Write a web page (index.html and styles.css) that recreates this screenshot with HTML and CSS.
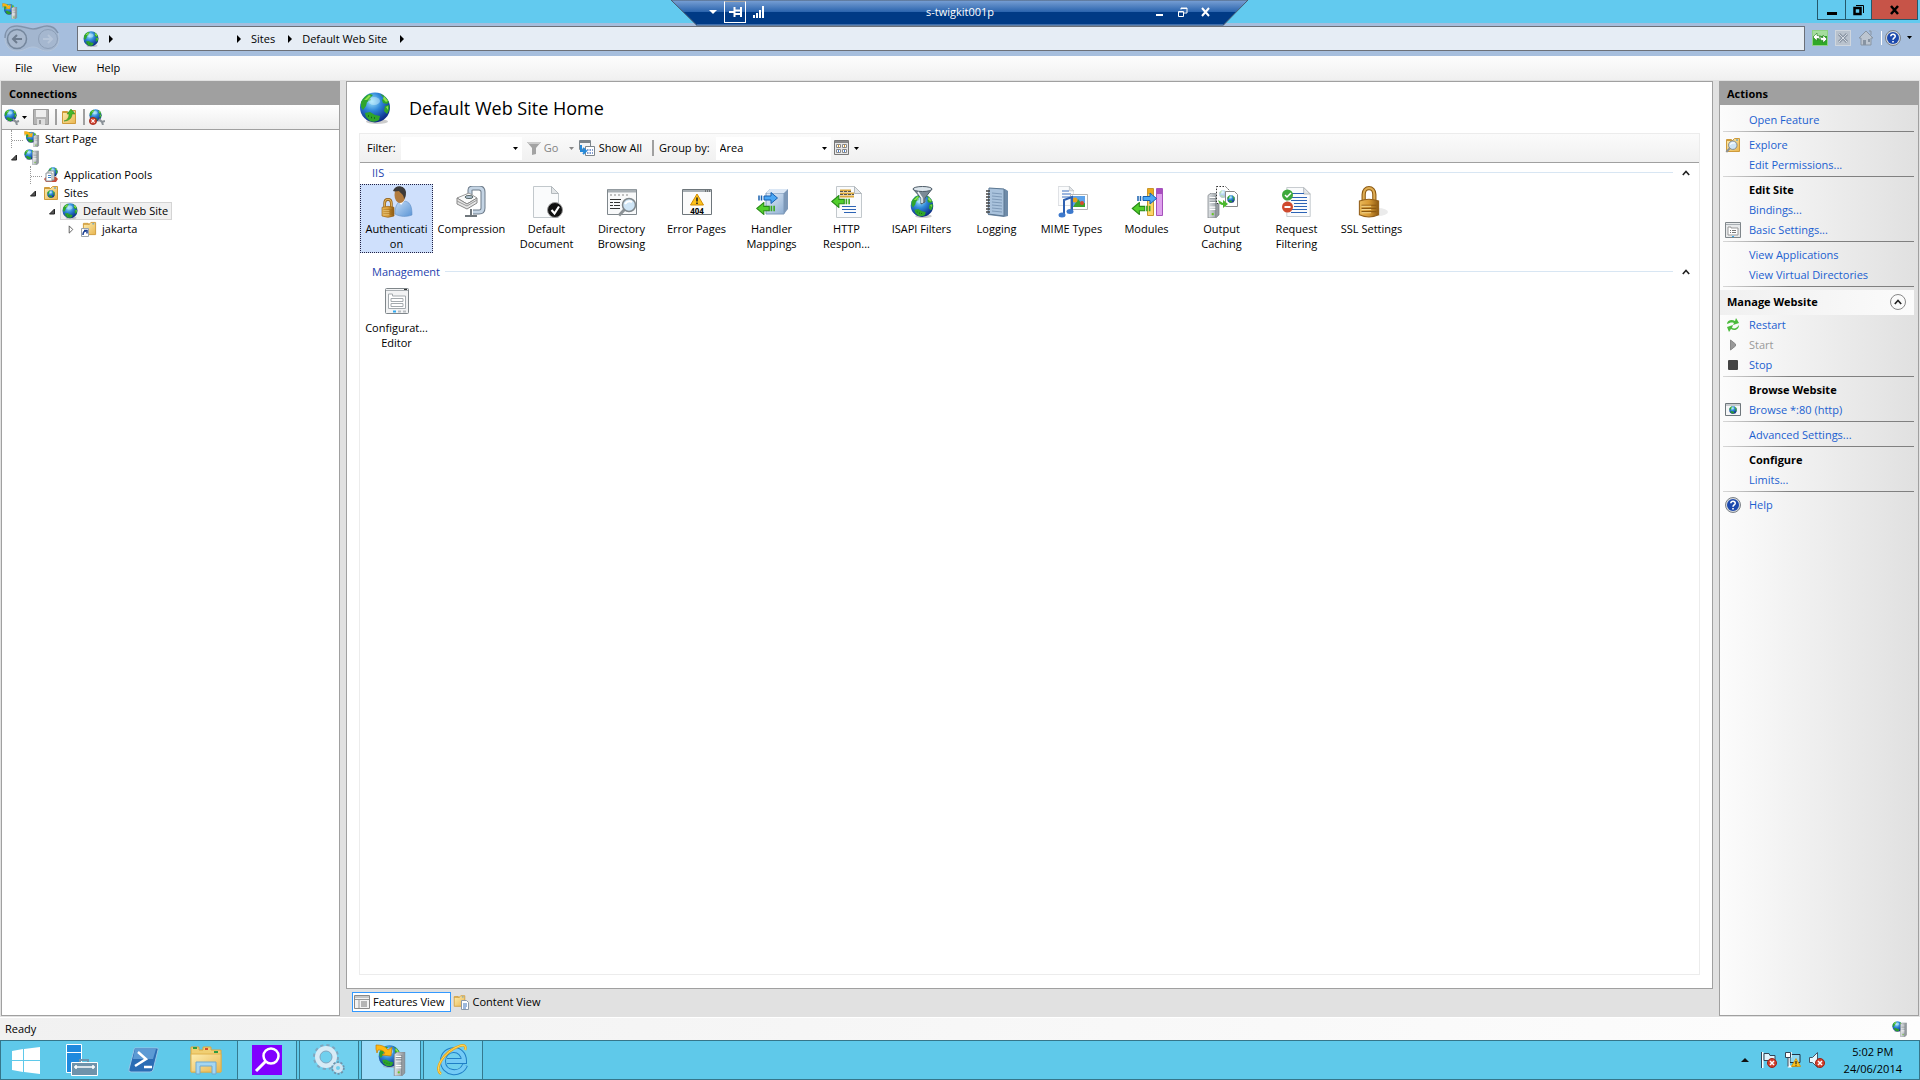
FILE: index.html
```html
<!DOCTYPE html>
<html lang="en">
<head>
<meta charset="utf-8">
<title>Internet Information Services (IIS) Manager</title>
<link rel="stylesheet" href="styles.css">
</head>
<body>
<svg class="sprite" aria-hidden="true">
  <defs>
    <radialGradient id="sea" cx=".4" cy=".3" r=".7"><stop offset="0" stop-color="#9be4fb"/><stop offset=".45" stop-color="#2f86d8"/><stop offset="1" stop-color="#0b2a86"/></radialGradient>
    <linearGradient id="steel" x1="0" x2="1"><stop offset="0" stop-color="#dfe3e6"/><stop offset="1" stop-color="#8b9297"/></linearGradient>
    <linearGradient id="gold" x1="0" x2="1"><stop offset="0" stop-color="#e9b95a"/><stop offset=".5" stop-color="#d89a34"/><stop offset="1" stop-color="#8d5a12"/></linearGradient>
    <linearGradient id="folder" x1="0" y1="0" x2="1" y2="1"><stop offset="0" stop-color="#fdeeb2"/><stop offset="1" stop-color="#e9b650"/></linearGradient>
    <linearGradient id="shirt" x1="0" y1="0" x2="1" y2="1"><stop offset="0" stop-color="#c5dcf6"/><stop offset="1" stop-color="#5b95d6"/></linearGradient>
    <linearGradient id="bluebox" x1="0" y1="0" x2="1" y2="1"><stop offset="0" stop-color="#e6effa"/><stop offset="1" stop-color="#8eaed2"/></linearGradient>
    <linearGradient id="rdp" x1="0" y1="0" x2="0" y2="1"><stop offset="0" stop-color="#7ba2d6"/><stop offset=".46" stop-color="#2c65ae"/><stop offset=".47" stop-color="#003a85"/><stop offset="1" stop-color="#003a85"/></linearGradient>
  </defs>
  <symbol id="globe" viewBox="0 0 32 32">
    <ellipse cx="18" cy="29.500" rx="11" ry="2.500" fill="#999" opacity=".5"/>
    <circle cx="16" cy="15.500" r="15" fill="url(#sea)"/>
    <path d="M2 10c2-4 5-7 9-8l3 1-3 3 1 2-4 2-1 4-3 4-2-3zM21 2c4 1 7 4 9 8l-2 2-4-1-1-3 2-2zM26 14l4-1c1 3 0 6-2 9l-3-3zM6 21l5-1 5 3 5 1-1 4c-3 2-6 2-9 1l-4-4z" fill="#2fa52c"/>
    <path d="M5 8l5-5 2 1-4 4zM25 4l4 5-2 1-3-3zM27 15l2-1v4z" fill="#8fe04c"/>
    <path d="M9 24h1M12 25.500h1M15 26h1" stroke="#14601a" stroke-width="1.500"/>
    <ellipse cx="15" cy="9" rx="6" ry="4" fill="#d4f4ff" opacity=".45"/>
  </symbol>
  <symbol id="tower" viewBox="0 0 16 32">
    <path d="M1 3l4-3h10v28l-4 4H1z" fill="url(#steel)" stroke="#7d8388"/>
    <path d="M3 6h8M3 9h8M3 12h8M3 18h8M3 21h8" stroke="#fff" stroke-width="1.500"/><path d="M3 7.500h8M3 10.500h8M11 4v27" stroke="#70777c"/>
    <circle cx="7" cy="27" r="1.500" fill="#65c522"/>
  </symbol>
  <symbol id="iis" viewBox="0 0 32 32">
    <use href="#globe" x="3" y="1" width="23" height="23"/>
    <path d="M1 1c5 0 9 1 12 5l4-3-1 9-9-1 3-2c-2-3-4-3-7-3l-1 3-1-4z" fill="#fdb913" stroke="#c97b00" stroke-width=".7"/>
    <use href="#tower" x="18" y="8" width="13" height="24"/>
  </symbol>
  <symbol id="websrv" viewBox="0 0 32 32"><use href="#globe" x="0" y="0" width="22" height="22"/><use href="#tower" x="16" y="3" width="14" height="29"/></symbol>
  <symbol id="arrow-g" viewBox="0 0 18 12"><path d="M.5 6L7 .5V4h5v4H7v3.500z" fill="#52cf2c" stroke="#278a16"/><path d="M14 3.500v5M16.500 3.500v5" stroke="#39a81f" stroke-width="1.500"/></symbol>
  <symbol id="arrow-b" viewBox="0 0 20 12"><path d="M19.500 6L13 .5V4H6v4h7v3.500z" fill="#4aa7f5" stroke="#175fae"/><path d="M1 3.500v5M3.500 3.500v5" stroke="#175fae" stroke-width="1.500"/></symbol>
  <symbol id="lock" viewBox="0 0 20 30">
    <path d="M5 14V8c0-8 10-8 10 0v6" fill="none" stroke="#8d5a12" stroke-width="4"/><path d="M5 14V8c0-8 10-8 10 0v6" fill="none" stroke="#dfae55" stroke-width="2"/>
    <path d="M1 14q9-3 18 0v13q-9 4-18 0z" fill="url(#gold)" stroke="#94601a"/><path d="M3 18h14M3 21h14M3 24h14" stroke="#8d5a12"/><path d="M3 19h9M3 22h9M3 25h9" stroke="#f5d78e"/>
  </symbol>
  <symbol id="page" viewBox="0 0 26 32"><path d="M.5.5h18l7 7v24H.5z" fill="#fafbfc" stroke="#c2c8cc"/><path d="M18.500.5v7h7z" fill="#e3e6e8" stroke="#b3b9bd"/></symbol>
  <symbol id="fold" viewBox="0 0 16 16"><path d="M1.500 4V2.500h5L8 4M1.500 3.500h6l2-2h5v13h-13z" fill="url(#folder)" stroke="#cf9b3b"/><path d="M11 3h2" stroke="#3f93d8"/></symbol>
  <symbol id="form" viewBox="0 0 24 26">
    <rect x=".5" y=".5" width="23" height="25" rx="1" fill="#f2f3f4" stroke="#7f868a"/><path d="M1 2.500h22" stroke="#a8aeb2"/><path d="M19 1.500h3" stroke="#333"/>
    <path d="M3.500 6h4v2h13v12.500h-17z" fill="#fff" stroke="#a4aaae"/><path d="M6 10.500h12v3H6zM6 15.500h12v3H6z" fill="none" stroke="#a4aaae"/><path d="M8 23.500h3" stroke="#2fa6ee" stroke-width="2"/><path d="M13 23.500h3M18 23.500h3" stroke="#b9bec1" stroke-width="2"/>
  </symbol>
  <symbol id="bad" viewBox="0 0 10 10"><circle cx="5" cy="5" r="4.500" fill="#d1402e" stroke="#9b2416"/><path d="M3 3l4 4M7 3L3 7" stroke="#fff" stroke-width="1.500"/></symbol>
  <symbol id="lens" viewBox="0 0 20 20"><path d="M7.500 12.500L2 18.500" stroke="#8c9296" stroke-width="3"/><circle cx="12" cy="8" r="6.500" fill="#cfe5f6" stroke="#7f878c" stroke-width="1.500"/><path d="M8 7q3-4 7-2" stroke="#fff" stroke-width="2" fill="none"/></symbol>
  <symbol id="help" viewBox="0 0 16 16"><circle cx="8" cy="8" r="7.500" fill="#d5d9dd" stroke="#7c8288"/><circle cx="8" cy="8" r="6" fill="#1c49ad"/><path d="M5.800 6.300C6 3.500 10.500 3.700 10.200 6.500 10 8 8 8 8 9.800M8 11v1.500" stroke="#fff" stroke-width="1.600" fill="none"/></symbol>
  <symbol id="up" viewBox="0 0 8 6"><path d="M.8 5L4 1.500 7.200 5" fill="none" stroke="#222" stroke-width="1.600"/></symbol>
  <symbol id="down" viewBox="0 0 5 3"><path d="M0 0h5L2.500 3z"/></symbol>
  <symbol id="play" viewBox="0 0 4 8"><path d="M0 0l4 4-4 4z"/></symbol>
  <symbol id="warn" viewBox="0 0 14 12"><path d="M7 .5L13.500 11.500H.5z" fill="#fcc21c" stroke="#d08a00"/><path d="M7 4v4M7 9v1.500" stroke="#222" stroke-width="1.600"/></symbol>
  <symbol id="open" viewBox="0 0 6 6"><path d="M5.500.5v5h-5z" fill="#555" stroke="#222"/></symbol>
</svg>

<header class="titlebar">
  <svg class="i16"><use href="#iis"/></svg>
  <div class="winbtns">
    <button aria-label="Minimize"><svg width="12" height="12"><path d="M1 8h10v3H1z"/></svg></button>
    <button class="restore" aria-label="Restore"><svg width="12" height="12" fill="none" stroke="#000"><path d="M1.500 4h6v6h-6z" stroke-width="2.500"/><path d="M3 1.500h7.500V9"/></svg></button>
    <button class="close" aria-label="Close"><svg width="12" height="12"><path d="M2 2l7 8M9 2l-7 8" stroke="#000" stroke-width="2.500"/></svg></button>
  </div>
</header>

<div class="rdp">
  <svg class="rdp-bg" viewBox="0 0 578 26" aria-hidden="true"><path d="M0 0l26 25.500h526L577 0z" fill="url(#rdp)" stroke="#4a5a6e"/><path d="M26 25h526" stroke="#7a9fd0"/></svg>
  <div class="rdp-left">
    <button aria-label="Menu"><svg width="8" height="4"><path d="M0 0h8L4 4z" fill="#fff"/></svg></button>
    <button class="pin" aria-label="Pin"><svg width="13" height="10" fill="none" stroke="#fff" stroke-width="2"><path d="M0 5h5M5.500 0v10M6 3.500h5M6 7h5M12 0v10"/></svg></button>
    <svg width="12" height="12"><path d="M0 12V9h2v3zM3 12V7h2v5zM6 12V4h2v8zM9 12V0h2v12z" fill="#fff"/></svg>
  </div>
  <span class="rdp-name">s-twigkit001p</span>
  <div class="rdp-right">
    <button aria-label="Minimize session"><svg width="10" height="10"><path d="M1 7h7v2H1z" fill="#fff"/></svg></button>
    <button aria-label="Restore session"><svg width="10" height="10" fill="none" stroke="#fff"><path d="M.5 4.500h5v5h-5zM3 2.500V1h6v5H6M1 5h4M3 1.500h6"/></svg></button>
    <button aria-label="Close session"><svg width="10" height="10"><path d="M1 1l7 8M8 1L1 9" stroke="#fff" stroke-width="2"/></svg></button>
  </div>
</div>

<nav class="address" aria-label="Address">
  <svg class="navpill" viewBox="0 0 56 28" aria-hidden="true"><path d="M13 1c7 0 10 3 16 3s8-3 14-3c16 0 16 25 0 25-7 0-8-4-14-4s-8 4-16 4C-3 26-3 1 13 1z" fill="#a3b6cf" stroke="#b3c4da"/><path d="M1 13C1 5 6 1 13 1c7 0 10 3 16 3s8-3 14-3c5 0 9 3 11 7" fill="none" stroke="#8093ac" stroke-width="1.500"/><circle cx="13" cy="14" r="9.500" fill="#a9b9ce" stroke="#75879d" stroke-width="1.500"/><circle cx="44" cy="14" r="9.500" fill="#a5b7cf" stroke="#8c9eb6"/><path d="M18 14H9m4-4l-4 4 4 4" fill="none" stroke="#6d7c8f" stroke-width="2"/><path d="M39 14h9m-4-4l4 4-4 4" fill="none" stroke="#b6c5d9" stroke-width="2"/></svg>
  <div class="crumbs">
    <svg class="i16"><use href="#globe"/></svg>
    <svg class="tri"><use href="#play"/></svg><a class="blank" href="#server" aria-label="Server"></a>
    <svg class="tri"><use href="#play"/></svg><a href="#sites">Sites</a>
    <svg class="tri"><use href="#play"/></svg><a href="#default">Default Web Site</a>
    <svg class="tri"><use href="#play"/></svg>
  </div>
  <div class="addr-tools">
    <button aria-label="Refresh"><svg class="i16" viewBox="0 0 16 16"><rect x=".5" y=".5" width="15" height="15" fill="#2fa827" stroke="#8ed184"/><path d="M1 1h14v5H1z" fill="#a4dd9d"/><path d="M1 7l4-4v2.500c3 0 4 2 3 5-1-2-1-2-3-2V11zM15 9l-4 4v-2.500c-3 0-4-2-3-5 1 2 1 2 3 2V5z" fill="#fff" stroke="#24751c" stroke-width=".6"/></svg></button>
    <button aria-label="Stop loading"><svg class="i16" viewBox="0 0 16 16"><rect x=".5" y=".5" width="15" height="15" fill="#b9c2cd" stroke="#cfd6de"/><path d="M4 4l8 8M12 4l-8 8" stroke="#8b96a5" stroke-width="3"/><path d="M4 4l8 8M12 4l-8 8" stroke="#d5dbe2"/></svg></button>
    <button aria-label="Home"><svg class="i16" viewBox="0 0 16 16"><path d="M1 8l7-7 7 7h-2v7H3V8z" fill="#bcc5d0" stroke="#8995a3"/><path d="M5 10h3v5H5zM10 9h2v3h-2z" fill="#8793a2"/><path d="M11 1h2v4" fill="none" stroke="#8995a3"/></svg></button>
    <span class="vbar"></span>
    <button aria-label="Help"><svg class="i16"><use href="#help"/></svg><svg class="dd"><use href="#down"/></svg></button>
  </div>
</nav>

<nav class="menubar"><button>File</button><button>View</button><button>Help</button></nav>

<main class="work">
  <section class="panel connections">
    <h2>Connections</h2>
    <div class="minitools">
      <button aria-label="Connect"><svg class="i16" viewBox="0 0 16 16"><use href="#globe" width="13" height="13"/><path d="M9 10l3 3 3-1M12 13l1 3" stroke="#8a9197" stroke-width="2" fill="none"/></svg><svg class="dd"><use href="#down"/></svg></button>
      <button aria-label="Save"><svg class="i16" viewBox="0 0 16 16"><path d="M.5.5h15v15h-15z" fill="#b4b4b4" stroke="#999"/><path d="M3 1h10v7H3z" fill="#eee"/><path d="M4 10h8v6H4z" fill="#ddd"/><path d="M6 11h2v4H6z" fill="#999"/></svg></button>
      <span class="vbar"></span>
      <button aria-label="Up"><svg class="i16" viewBox="0 0 16 16"><use href="#fold" width="16" height="16"/><path d="M3 12c4-1 5-4 5-7H6l4-5 4 5h-3c0 4-3 7-8 7z" fill="#47b82a" stroke="#28831a" stroke-width=".5"/></svg></button>
      <span class="vbar"></span>
      <button aria-label="Disconnect"><svg class="i16" viewBox="0 0 16 16"><use href="#globe" width="13" height="13"/><path d="M10 10l3 3 3-1M13 13l1 3" stroke="#8a9197" stroke-width="2" fill="none"/><use href="#bad" y="8" width="8" height="8"/></svg></button>
    </div>
    <ul class="tree">
      <li class="l0"><i class="exp dots corner"></i><a href="#start"><svg class="i16"><use href="#iis"/></svg>Start Page</a></li>
      <li class="l0"><i class="exp"><svg><use href="#open"/></svg></i><a href="#server" aria-label="Server"><svg class="i16"><use href="#websrv"/></svg></a></li>
      <li class="l1"><i class="exp dots corner"></i><a href="#pools"><svg class="i16" viewBox="0 0 16 16"><use href="#globe" x="5" width="10" height="10"/><path d="M1 12l2-2h10l2 2-2 3H3z" fill="#c54b38"/><path d="M5 4h6v9H5z" fill="#fff" stroke="#8d9499"/><path d="M3 6h6v8H3z" fill="#fff" stroke="#8d9499"/><path d="M5 8.500h3M5 10.500h3" stroke="#3d83c9"/></svg>Application Pools</a></li>
      <li class="l1"><i class="exp"><svg><use href="#open"/></svg></i><a href="#sites"><svg class="i16" viewBox="0 0 16 16"><use href="#fold" width="16" height="16"/><use href="#globe" x="4" y="5" width="8" height="8"/></svg>Sites</a></li>
      <li class="l2"><i class="exp"><svg><use href="#open"/></svg></i><a class="sel" href="#default"><svg class="i16"><use href="#globe"/></svg>Default Web Site</a></li>
      <li class="l3"><i class="exp"><svg viewBox="0 0 6 10"><path d="M1 1l4 4-4 4z" fill="#fff" stroke="#555"/></svg></i><a href="#jakarta"><svg class="i16" viewBox="0 0 16 16"><use href="#fold" x="1" width="15" height="15"/><path d="M.5 7.500h7v8h-7z" fill="#fff" stroke="#9aa3aa"/><path d="M2 14c0-3 1-4 3-4M3 9.500h3v3" fill="none" stroke="#1b3f93" stroke-width="1.500"/></svg>jakarta</a></li>
    </ul>
  </section>

  <section class="center">
    <div class="panel home">
      <div class="homehead"><svg class="i32"><use href="#globe"/></svg><h1>Default Web Site Home</h1></div>
      <div class="features">
        <div class="filterbar">
          <label for="filter">Filter:</label>
          <span class="combo filter"><input id="filter" type="text"><svg class="dd"><use href="#down"/></svg></span>
          <button class="go" disabled><svg class="i16" viewBox="0 0 16 16"><path d="M1 2h14l-5 6v6l-4 1V8z" fill="#a3a3a3"/><path d="M1 2h14l-2 2H3z" fill="#ccc"/></svg>Go<svg class="dd"><use href="#down"/></svg></button>
          <button><svg class="i16" viewBox="0 0 16 16"><path d="M.5.5h11v9H.5z" fill="#f3f5f6" stroke="#7c858b"/><path d="M1 2h10" stroke="#7c858b" stroke-width="2"/><path d="M6.500 6.500h9v9h-9z" fill="#fff" stroke="#7c858b"/><path d="M8 10h6M8 13h6" stroke="#5b7fc1" stroke-width="1.500" stroke-dasharray="1.500 1"/><path d="M2 5v6h4M4 8l3 3-3 3" stroke="#2689d8" stroke-width="2" fill="none"/></svg>Show All</button>
          <span class="vbar"></span>
          <label for="group">Group by:</label>
          <span class="combo group"><select id="group"><option>Area</option></select><svg class="dd"><use href="#down"/></svg></span>
          <button aria-label="View"><svg class="i16" viewBox="0 0 16 16"><path d="M.5.5h14v14H.5z" fill="#e8e8e8" stroke="#777"/><path d="M1 2h13" stroke="#888" stroke-width="2"/><path d="M2.500 4.500h4v3h-4zM8.500 4.500h4v3h-4zM2.500 9.500h4v3h-4zM8.500 9.500h4v3h-4z" fill="#fff" stroke="#888"/><path d="M4 6h1M10 6h1" stroke="#d59a2c" stroke-width="2"/><path d="M4 11h1M10 11h1" stroke="#4a7fce" stroke-width="2"/></svg><svg class="dd"><use href="#down"/></svg></button>
        </div>
        <div class="grouphead"><h3>IIS</h3><hr><button aria-label="Collapse IIS"><svg width="8" height="6"><use href="#up"/></svg></button></div>
        <div class="grid">
          <a class="feat on" href="#f"><svg class="i32" viewBox="0 0 32 32"><path d="M14 28c0-9 3-13 8-13 7 0 9 5 9 14-5 2-12 2-17-1z" fill="url(#shirt)" stroke="#5f8fc6" stroke-width=".6"/><path d="M17 14l3 5 4-5z" fill="#fff"/><ellipse cx="19" cy="9" rx="5.500" ry="8" fill="#b27b3f"/><path d="M12 5c2-7 12-6 13 1 0 4-1 6-2 7 0-5-4-6-5-8-2 0-4 1-6 0z" fill="#3d3a38"/><use href="#lock" x="0" y="12" width="14" height="20"/></svg><span>Authenticati on</span></a>
          <a class="feat" href="#f"><svg class="i32" viewBox="0 0 32 32"><path d="M14 9V4q0-2 3-2h6q4 0 4 4v16q0 4-4 4h-6" fill="none" stroke="#6c7a88" stroke-width="5"/><path d="M14 9V4q0-2 3-2h6q4 0 4 4v16q0 4-4 4h-6" fill="none" stroke="#c4d4e4" stroke-width="3"/><path d="M1 12l12-5 8 5-10 6z" fill="#fafafa" stroke="#999"/><path d="M1 12v6l10 5 10-6v-5l-10 6z" fill="#e6e6e6" stroke="#888"/><path d="M1 15l10 5 10-6" fill="none" stroke="#999"/><path d="M15 23v6M9 30h12" stroke="#70777c" stroke-width="2"/><ellipse cx="13" cy="11" rx="4" ry="1.500" fill="#b8c8d8" stroke="#566"/></svg><span>Compression</span></a>
          <a class="feat" href="#f"><svg class="i32" viewBox="0 0 32 32"><use href="#page" x="2" y="0" width="26" height="32"/><circle cx="24" cy="24" r="7.500" fill="#111" stroke="#999"/><path d="M20.500 24l3 3.500 4.500-7" fill="none" stroke="#fff" stroke-width="2.200"/></svg><span>Default Document</span></a>
          <a class="feat" href="#f"><svg class="i32" viewBox="0 0 32 32"><path d="M1.500 3.500h29v25h-29z" fill="#f8f9fa" stroke="#7f878c"/><path d="M2 5h28" stroke="#a8afb4" stroke-width="3"/><path d="M4 9h20" stroke="#888" stroke-dasharray="2 2"/><path d="M4 13.500h11M4 16.500h3M8 16.500h6M4 19.500h3M8 19.500h6M4 22.500h10" stroke="#333"/><use href="#lens" x="11" y="11" width="20" height="20"/></svg><span>Directory Browsing</span></a>
          <a class="feat" href="#f"><svg class="i32" viewBox="0 0 32 32"><path d="M1.500 3.500h29v25h-29z" fill="#fbfbfb" stroke="#6e767b"/><path d="M2 5h28" stroke="#a8afb4" stroke-width="2"/><path d="M24 5h5" stroke="#333" stroke-dasharray="1 1"/><use href="#warn" x="9" y="7" width="14" height="13"/><text x="16" y="28" font-size="8" text-anchor="middle" font-weight="700">404</text></svg><span>Error Pages</span></a>
          <a class="feat" href="#f"><svg class="i32" viewBox="0 0 32 32"><path d="M10 7l4-4h18v20l-4 5H10z" fill="#7d98b8"/><path d="M10 7h18v21H10z" fill="url(#bluebox)" stroke="#7d98b8"/><path d="M10 7l4-4h18l-4 4z" fill="#dbe7f5"/><use href="#arrow-b" x="2" y="6" width="20" height="12"/><use href="#arrow-g" x="0" y="16" width="20" height="13"/></svg><span>Handler Mappings</span></a>
          <a class="feat" href="#f"><svg class="i32" viewBox="0 0 32 32"><use href="#page" x="5" y="0" width="26" height="32"/><path d="M9 4.500h11M9 7.500h14M9 10.500h14" stroke="#d9a83c" stroke-width="2"/><path d="M9 5.500h11M9 8.500h14" stroke="#555" stroke-dasharray="3 1"/><path d="M11 20.500h14M11 23.500h14M13 26.500h12" stroke="#2c63b5"/><use href="#arrow-g" x="0" y="9" width="20" height="13"/></svg><span>HTTP Respon...</span></a>
          <a class="feat" href="#f"><svg class="i32" viewBox="0 0 32 32"><use href="#globe" x="4" y="8" width="24" height="24"/><path d="M7 3l8 9v6l4-2v-4l7-9z" fill="#7b8a96" stroke="#4c5a66"/><ellipse cx="16.500" cy="3" rx="9.500" ry="2.500" fill="#dce5ec" stroke="#4c5a66"/><path d="M12 6l4 6v5" stroke="#eef3f6" fill="none" stroke-width="1.500"/></svg><span>ISAPI Filters</span></a>
          <a class="feat" href="#f"><svg class="i32" viewBox="0 0 32 32"><path d="M8 2l16 1 3 2v25l-4 1-16-2z" fill="#6f8ba8"/><path d="M8 2l15 1v27L7 28z" fill="#a9c2dc" stroke="#5d7893"/><path d="M11 7l10 1M11 10l10 1M11 13l10 1M11 16l10 1M11 19l10 1M11 22l10 1M11 25l10 1" stroke="#7e9ab8"/><path d="M5 5h4M5 8h4M5 11h4M5 14h4M5 17h4M5 20h4M5 23h4M5 26h4" stroke="#444" stroke-width="1.300"/></svg><span>Logging</span></a>
          <a class="feat" href="#f"><svg class="i32" viewBox="0 0 32 32"><use href="#page" x="2" y="0" width="16" height="20"/><path d="M6 5h7M6 8h9M6 11h9" stroke="#3b6fc0"/><path d="M14.500 8.500h17v15h-17z" fill="#fff" stroke="#b5b5b5"/><path d="M17 10h12v11H17z" fill="#5da2ea"/><path d="M17 21l5-8 4 5 3-1v4z" fill="#3da22b"/><circle cx="19" cy="14" r="2.500" fill="#e8a11c"/><circle cx="26" cy="17" r="2" fill="#d84a2b"/><path d="M8 28V14l8-3v14" fill="none" stroke="#2c5fb0" stroke-width="2"/><ellipse cx="6" cy="29" rx="3.500" ry="2.500" fill="#3c78cc"/><ellipse cx="14" cy="25.500" rx="3.500" ry="2.500" fill="#3c78cc"/></svg><span>MIME Types</span></a>
          <a class="feat" href="#f"><svg class="i32" viewBox="0 0 32 32"><path d="M16.500 2.500h6v27h-6z" fill="#fbd66a" stroke="#c8962a"/><path d="M17 3h5v5h-5z" fill="#e9a91c"/><path d="M25.500 2.500h6v27h-6z" fill="#dfa0ee" stroke="#a552bb"/><path d="M26 3h5v5h-5z" fill="#a94cc0"/><use href="#arrow-b" x="6" y="6" width="20" height="13"/><use href="#arrow-g" x="0" y="16" width="21" height="13"/></svg><span>Modules</span></a>
          <a class="feat" href="#f"><svg class="i32" viewBox="0 0 32 32"><use href="#tower" x="0" y="7" width="15" height="25"/><path d="M10.500.5h9l4 4v13h-13z" fill="#fff" stroke="#333" stroke-dasharray="1.500 1.500"/><use href="#globe" x="13" y="4" width="8" height="8" opacity=".35"/><path d="M19.500 5.500h9l3 3v12h-12z" fill="#fff" stroke="#888"/><use href="#globe" x="21" y="9" width="8" height="8"/><path d="M12 14l5 3v-3l5 4-5 4v-3c-3 0-4-2-5-5z" fill="#4bb82c"/></svg><span>Output Caching</span></a>
          <a class="feat" href="#f"><svg class="i32" viewBox="0 0 32 32"><use href="#page" x="5" y="1" width="25" height="30"/><path d="M10 7.500h13M10 11.500h16M10 14.500h16M13 17.500h13M13 20.500h13M10 23.500h16M10 26.500h16" stroke="#2c63b5"/><circle cx="6.500" cy="9" r="5.500" fill="#3da93a"/><path d="M4 9l2 2 4-4" stroke="#fff" stroke-width="1.500" fill="none"/><circle cx="6.500" cy="21" r="5.500" fill="#cf4a2e"/><path d="M3.500 21h6" stroke="#fff" stroke-width="2"/></svg><span>Request Filtering</span></a>
          <a class="feat" href="#f"><svg class="i32" viewBox="0 0 32 32"><ellipse cx="22" cy="26" rx="10" ry="4" fill="#ebebeb"/><use href="#lock" x="2" y="0" width="22" height="32"/></svg><span>SSL Settings</span></a>
        </div>
        <div class="grouphead"><h3>Management</h3><hr><button aria-label="Collapse Management"><svg width="8" height="6"><use href="#up"/></svg></button></div>
        <div class="grid">
          <a class="feat" href="#f"><svg class="i32" viewBox="0 0 32 32"><use href="#form" x="4" y="3" width="24" height="26"/></svg><span>Configurat... Editor</span></a>
        </div>
      </div>
    </div>
    <div class="viewtabs">
      <button class="cur"><svg class="i16" viewBox="0 0 16 16"><path d="M.5 1.500h15v13H.5z" fill="#f3f3f3" stroke="#888"/><path d="M1 3h14M1 5.500h14M5 5v9" stroke="#999"/><path d="M7 8h6M7 10h6M7 12h6" stroke="#777"/></svg>Features View</button>
      <button><svg class="i16" viewBox="0 0 16 16"><use href="#fold" width="13" height="14"/><path d="M8.500 6.500h5l2 2v7h-7z" fill="#fff" stroke="#8b98a8"/><path d="M10 10h4M10 12h4M10 14h3" stroke="#3d73bb"/></svg>Content View</button>
    </div>
  </section>

  <aside class="panel actions">
    <h2>Actions</h2>
    <div class="actlist">
      <a href="#a">Open Feature</a>
      <hr>
      <a href="#a"><svg class="i16" viewBox="0 0 16 16"><use href="#fold" width="16" height="16"/><use href="#lens" x="0" y="3" width="13" height="13"/></svg>Explore</a>
      <a href="#a">Edit Permissions...</a>
      <hr>
      <h4>Edit Site</h4>
      <a href="#a">Bindings...</a>
      <a href="#a"><svg class="i16" viewBox="0 0 16 16"><path d="M.5.500h15v15H.5z" fill="#e8eaeb" stroke="#7f868a"/><path d="M1 2.500h14" stroke="#a8aeb2"/><path d="M3 5h3v1h7v7H3z" fill="#fff" stroke="#999"/><path d="M5 8.500h1M7 8.500h4M5 10.500h1M7 10.500h4" stroke="#777"/><path d="M7 14.500h2" stroke="#2fa6ee"/></svg>Basic Settings...</a>
      <hr>
      <a href="#a">View Applications</a>
      <a href="#a">View Virtual Directories</a>
      <hr>
      <div class="acthead"><h4>Manage Website</h4><button aria-label="Collapse"><svg width="8" height="6"><use href="#up"/></svg></button></div>
      <a href="#a"><svg class="i16" viewBox="0 0 16 16"><path d="M2 7c0-4 5-5 8-3l1-3 3 5-6 2 1-2c-3-1-4 0-7 1zM14 8c0 5-5 6-8 4l-2 3-2-5 6-2-1 3c3 1 5 0 7-3z" fill="#4cbb3c"/></svg>Restart</a>
      <a class="off" aria-disabled="true"><svg class="i16" viewBox="0 0 16 16"><path d="M5.500 3v10l5-4V7z" fill="#999" stroke="#888"/></svg>Start</a>
      <a href="#a"><svg class="i16" viewBox="0 0 16 16"><rect x="3" y="3" width="10" height="10" rx="1" fill="#444"/></svg>Stop</a>
      <hr>
      <h4>Browse Website</h4>
      <a href="#a"><svg class="i16" viewBox="0 0 16 16"><path d="M.5 1.500h15v12H.5z" fill="#f5f6f7" stroke="#6f777c"/><path d="M1 3h14" stroke="#9aa2a7"/><use href="#globe" x="4" y="4" width="8" height="8"/></svg>Browse *:80 (http)</a>
      <hr>
      <a href="#a">Advanced Settings...</a>
      <hr>
      <h4>Configure</h4>
      <a href="#a">Limits...</a>
      <hr>
      <a href="#a"><svg class="i16"><use href="#help"/></svg>Help</a>
    </div>
  </aside>
</main>

<footer class="status"><span>Ready</span><svg class="i16"><use href="#websrv"/></svg></footer>

<nav class="taskbar" aria-label="Taskbar">
  <button class="start" aria-label="Start"><svg width="28" height="27" viewBox="0 0 28 27"><path d="M0 4l11-2v11H0zM12 2l16-2v13H12zM0 14h11v11L0 23zM12 14h16v13l-16-2z" fill="#fff"/></svg></button>
  <button aria-label="Server Manager"><svg width="32" height="32" viewBox="0 0 32 32"><path d="M.5.5h15v28H.5z" fill="#1f8ade" stroke="#fff"/><path d="M1 8.500h14" stroke="#fff"/><path d="M14 19v-3h8v3" fill="none" stroke="#6d93ad" stroke-width="2"/><path d="M5.500 18.500h26v13h-26z" fill="#6f93ab" stroke="#fff"/><path d="M8 23h21M10 21v4M27 21v4" stroke="#fff" stroke-width="1.500"/></svg></button>
  <button aria-label="PowerShell"><svg width="32" height="32" viewBox="0 0 32 32"><path d="M7 4h22q2 0 1 2l-5 20q-1 2-3 2H3q-3 0-2-3L6 6q0-2 1-2z" fill="#2a6cb4" stroke="#9ac6e8"/><path d="M7 5h21l-3 10H5z" fill="#5c9ad4"/><path d="M10 8l8 7-11 7M16 23h8" fill="none" stroke="#fff" stroke-width="2.500"/></svg></button>
  <button aria-label="File Explorer"><svg width="32" height="32" viewBox="0 0 32 32"><path d="M1 6V3h8v3h4V3h8v3h10v22H1z" fill="#f0cf73" stroke="#d9a741"/><path d="M3 4h4M24 8h4" stroke="#2e9c42" stroke-width="2"/><path d="M15 5h3" stroke="#d54a2c" stroke-width="2"/><path d="M1 10h30v18H1z" fill="url(#folder)" stroke="#e0b24e"/><path d="M6 30V18h20v12h-4v-8H10v8z" fill="#a4d6f2" stroke="#6fa9d0"/></svg></button>
  <button class="run" aria-label="Search"><svg width="30" height="30" viewBox="0 0 30 30"><path d="M0 0h30v30H0z" fill="#8000ff"/><circle cx="19" cy="11" r="7.500" fill="none" stroke="#fff" stroke-width="2.500"/><path d="M13.500 16.500L4 26" stroke="#fff" stroke-width="3"/></svg></button>
  <button class="run" aria-label="Services"><svg width="32" height="32" viewBox="0 0 32 32"><circle cx="13" cy="13" r="11" fill="none" stroke="#7ea6bf" stroke-width="4" stroke-dasharray="3 2.760"/><circle cx="13" cy="13" r="8.500" fill="none" stroke="#d7ebf6" stroke-width="5"/><circle cx="13" cy="13" r="6" fill="none" stroke="#7ea6bf"/><circle cx="25" cy="24" r="5.500" fill="none" stroke="#6f93ab" stroke-width="2.500" stroke-dasharray="2 1.450"/><circle cx="25" cy="24" r="3.500" fill="none" stroke="#cfe4f0" stroke-width="3"/></svg></button>
  <button class="run front" aria-label="IIS Manager"><svg width="32" height="32"><use href="#iis"/></svg></button>
  <button class="run" aria-label="Internet Explorer"><svg width="32" height="32" viewBox="0 0 32 32"><path d="M28 21C24 32 6 30 6 17 6 3 27 2 27 17H10" fill="none" stroke="#1f7fc6" stroke-width="6"/><path d="M28 21C24 32 6 30 6 17 6 3 27 2 27 17H10" fill="none" stroke="#74cbf6" stroke-width="4"/><path d="M4 30C-4 24 8 8 20 3c6-3 10-2 8 3" fill="none" stroke="#e9a91c" stroke-width="2.500"/><path d="M4 30C-4 24 8 8 20 3c6-3 10-2 8 3" fill="none" stroke="#ffdc62"/></svg></button>
  <div class="tray">
    <button aria-label="Show hidden icons"><svg width="8" height="4"><path d="M4 0l4 4H0z" fill="#111"/></svg></button>
    <svg class="i16" viewBox="0 0 16 16"><path d="M1.500 0v16" stroke="#fff" stroke-width="2"/><path d="M.5 0v16M3 1.500h5l1 2h5v7H8l-1-2H3z" fill="#dff3fb" stroke="#345"/><use href="#bad" x="6" y="6" width="10" height="10"/></svg>
    <svg class="i16" viewBox="0 0 16 16"><path d="M5 2.500h10v8H5z" fill="#8fd8f0" stroke="#234"/><path d="M7 14h6" stroke="#234"/><path d="M.8.500h5v4h-2v10h3" fill="none" stroke="#fff" stroke-width="2"/><path d="M.5.500h5v5h-5zM3 6v8.500" fill="#fff" stroke="#345"/><use href="#warn" x="6" y="6" width="10" height="9"/></svg>
    <svg class="i16" viewBox="0 0 16 16"><path d="M.5 5.500h3l5-5v15l-5-5h-3z" fill="#e8f7fd" stroke="#456"/><use href="#bad" x="6" y="6" width="10" height="10"/></svg>
    <div class="clock"><time>5:02 PM</time><time>24/06/2014</time></div>
  </div>
</nav>
</body>
</html>
```
FILE: styles.css
```css
* { box-sizing: border-box; }

body {
  margin: 0;
  height: 100vh;
  display: flex;
  flex-direction: column;
  overflow: hidden;
  background: #e1e1e1;
  color: #000;
  font: 11px/18px "Open Sans", "Noto Sans", sans-serif;
}

button, input, select { font: inherit; color: inherit; border: 0; padding: 0; margin: 0; background: none; }
button { display: flex; align-items: center; white-space: nowrap; }
a { color: inherit; text-decoration: none; }
h1, h2, h3, h4, ul, hr { margin: 0; padding: 0; }
h2, h4 { font-size: 11px; font-weight: 700; }
svg { flex: none; display: block; }
.sprite { position: absolute; width: 0; height: 0; }
.i16 { width: 16px; height: 16px; }
.i32 { width: 32px; height: 32px; }
.dd { width: 5px; height: 3px; }
.vbar { width: 2px; height: 16px; background: #a0a0a0; }

/* window frame */
.titlebar { height: 23px; flex: none; display: flex; justify-content: space-between; padding: 0 2px; background: #62caef; }
.titlebar > svg { margin-top: 3px; }
.winbtns { display: flex; height: 20px; }
.winbtns button { width: 28px; justify-content: center; border: 1px solid #24586b; border-top: 0; border-right: 0; }
.winbtns .restore { width: 26px; }
.winbtns .close { width: 47px; background: #c75448; border-right: 1px solid #24586b; }

/* remote session bar, floats over the window */
.rdp { position: absolute; top: 0; left: 50%; width: 578px; height: 26px; margin-left: -289px; display: flex; align-items: center; justify-content: space-between; padding: 0 38px 2px 38px; color: #fff; }
.rdp-bg { position: absolute; left: 0; top: 0; width: 578px; height: 26px; }
.rdp-left, .rdp-right, .rdp-name { position: relative; display: flex; align-items: center; flex: 1; }
.rdp-left { gap: 7px; }
.rdp-name { justify-content: center; }
.rdp-right { justify-content: flex-end; gap: 13px; }
.pin { width: 22px; height: 22px; justify-content: center; border: 1px solid #fff; border-top-color: #a9a9a9; }

.address { height: 33px; flex: none; display: flex; align-items: center; background: #a6bedd; padding: 0 8px 2px 4px; }
.navpill { width: 56px; height: 28px; }
.crumbs { flex: 1; height: 25px; margin: 0 7px 0 17px; padding-left: 5px; display: flex; align-items: center; background: #e6edf5; border: 1px solid #6b7079; }
.tri { width: 4px; height: 8px; margin: 0 10px 0 10px; }
.blank { width: 104px; }
.crumbs a + .tri { margin-left: 13px; }
.crumbs .blank + .tri { margin-left: 10px; }
.addr-tools { display: flex; align-items: center; gap: 7px; padding-bottom: 2px; }
.addr-tools .vbar { height: 14px; width: 1px; background: #fff; }
.addr-tools .dd { margin-left: 6px; }
.addr-tools .vbar + button { margin-left: -4px; }

.menubar { height: 24px; flex: none; display: flex; gap: 20px; padding-left: 15px; background: linear-gradient(#fdfdfd, #f0f0f0); }

/* work area */
.work { flex: 1; min-height: 0; display: flex; padding: 1px; gap: 6px; }
.panel { background: #fff; border: 1px solid #a0a0a0; }
.panel h2 { height: 24px; line-height: 26px; padding-left: 7px; background: #a0a0a0; margin-top: -1px; }
.connections { width: 339px; }
.minitools { height: 25px; display: flex; align-items: center; gap: 6px; padding-left: 2px; background: linear-gradient(#fff, #ededed); border-bottom: 1px solid #a0a0a0; }
.minitools .dd { margin: 0 0 0 2px; }
.minitools .vbar { margin-right: -2px; }

.tree { list-style: none; }
.tree li { display: flex; align-items: center; height: 18px; }
.tree a { display: flex; align-items: center; gap: 5px; height: 18px; padding: 0 4px 0 2px; }
.tree .sel { background: #f0f0f0; outline: 1px solid #d4d4d4; outline-offset: -1px; }
.exp { width: 12px; height: 18px; display: flex; align-items: center; margin-right: -1px; }
.exp svg { width: 6px; height: 9px; }
.dots { background: linear-gradient(90deg, #999 50%, transparent 50%) 0 10px / 2px 1px repeat-x; }
.dots.corner { border-left: 1px dotted #999; }
.l0 { padding-left: 9px; }
.l1 { padding-left: 28px; }
.l2 { padding-left: 47px; }
.l3 { padding-left: 66px; }

.center { flex: 1; min-width: 0; display: flex; flex-direction: column; }
.home { flex: 1; display: flex; flex-direction: column; padding: 0 12px 13px 12px; }
.homehead { height: 51px; display: flex; align-items: center; gap: 18px; }
.homehead h1 { font-size: 18px; font-weight: 400; line-height: 24px; }
.features { flex: 1; border: 1px solid #ececec; }
.filterbar { height: 29px; display: flex; align-items: center; padding-left: 7px; background: linear-gradient(#fbfbfb, #f0f0f0); border-bottom: 1px solid #a0a0a0; }
.combo { display: flex; align-items: center; height: 23px; background: #fff; padding-right: 4px; }
.combo input { flex: 1; min-width: 0; outline: 0; }
.combo select { flex: 1; appearance: none; padding-left: 4px; }
.filter { width: 121px; margin: 0 4px 0 5px; }
.group { width: 115px; margin: 0 3px 0 6px; }
.filterbar button { gap: 4px; }
.filterbar .go { width: 53px; gap: 2px; color: #838383; fill: #888; }
.go .dd { margin-left: auto; margin-right: 5px; }
.filterbar .vbar { margin: 0 5px 0 10px; }

.grouphead { height: 19px; display: flex; align-items: center; padding: 0 9px 0 12px; gap: 5px; margin-bottom: 2px; }
.grouphead h3 { font-size: 11px; font-weight: 400; color: #1e3fae; }
.grouphead hr { flex: 1; border: 0; height: 1px; background: #d8e6f3; margin-right: 4px; }
.grid { display: flex; flex-wrap: wrap; gap: 2px; min-height: 78px; align-items: flex-start; }
.feat { width: 73px; height: 69px; padding-top: 2px; display: flex; flex-direction: column; align-items: center; text-align: center; line-height: 15px; }
.feat span { margin-top: 3px; }
.feat.on { background: #cfe0fc; outline: 1px dotted #224; outline-offset: -1px; }

.viewtabs { height: 27px; flex: none; display: flex; align-items: center; padding: 0 0 1px 6px; }
.viewtabs button { height: 20px; gap: 3px; padding: 0 3px; border: 1px solid transparent; padding-left: 1px; }
.viewtabs .cur { background: #fff; border-color: #3399ff; padding-right: 6px; }

/* actions pane */
.actions { width: 200px; background: linear-gradient(90deg, #fcfcfc, #e0e0e0); }
.actlist { padding: 5px 4px 0 5px; line-height: 20px; }
.actlist > a, .actlist > h4 { display: flex; align-items: center; height: 20px; padding-left: 24px; }
.actlist > a { color: #1b5fd0; }
.actlist > a svg { margin: -1px 8px 0 -24px; }
.actlist > .off { color: #9a9a9a; }
.actlist hr { border: 0; height: 1px; margin: 1px 0 3px -2px; background: linear-gradient(90deg, #d8d8d8, #808080 35%); }
.acthead { height: 25px; margin-left: -5px; padding: 0 8px 2px 7px; display: flex; align-items: center; justify-content: space-between; background: linear-gradient(90deg, #f0f0f0, #fbfbfb); }
.acthead button { width: 16px; height: 16px; justify-content: center; border: 1px solid #888; border-radius: 50%; }

.status { height: 23px; flex: none; display: flex; align-items: center; justify-content: space-between; padding: 0 12px 0 5px; border-top: 1px solid #fff; background: linear-gradient(90deg, #f1f1f1, #fdfdfd); }

/* taskbar */
.taskbar { height: 40px; flex: none; display: flex; background: #5fc9ea; border: 1px solid #35758a; }
.taskbar > button { width: 62px; justify-content: center; }
.taskbar > .start { width: 50px; }
.taskbar > .run { width: 60px; margin-right: 2px; background: #70d0ee; border: 1px solid #35798f; border-width: 0 1px; }
.taskbar > .front { background: #9cdcfa; }
.tray { margin-left: auto; display: flex; align-items: center; gap: 8px; padding-right: 17px; }
.tray button { margin-right: 4px; }
.clock { display: flex; flex-direction: column; text-align: center; line-height: 17px; margin-left: 11px; }
```
